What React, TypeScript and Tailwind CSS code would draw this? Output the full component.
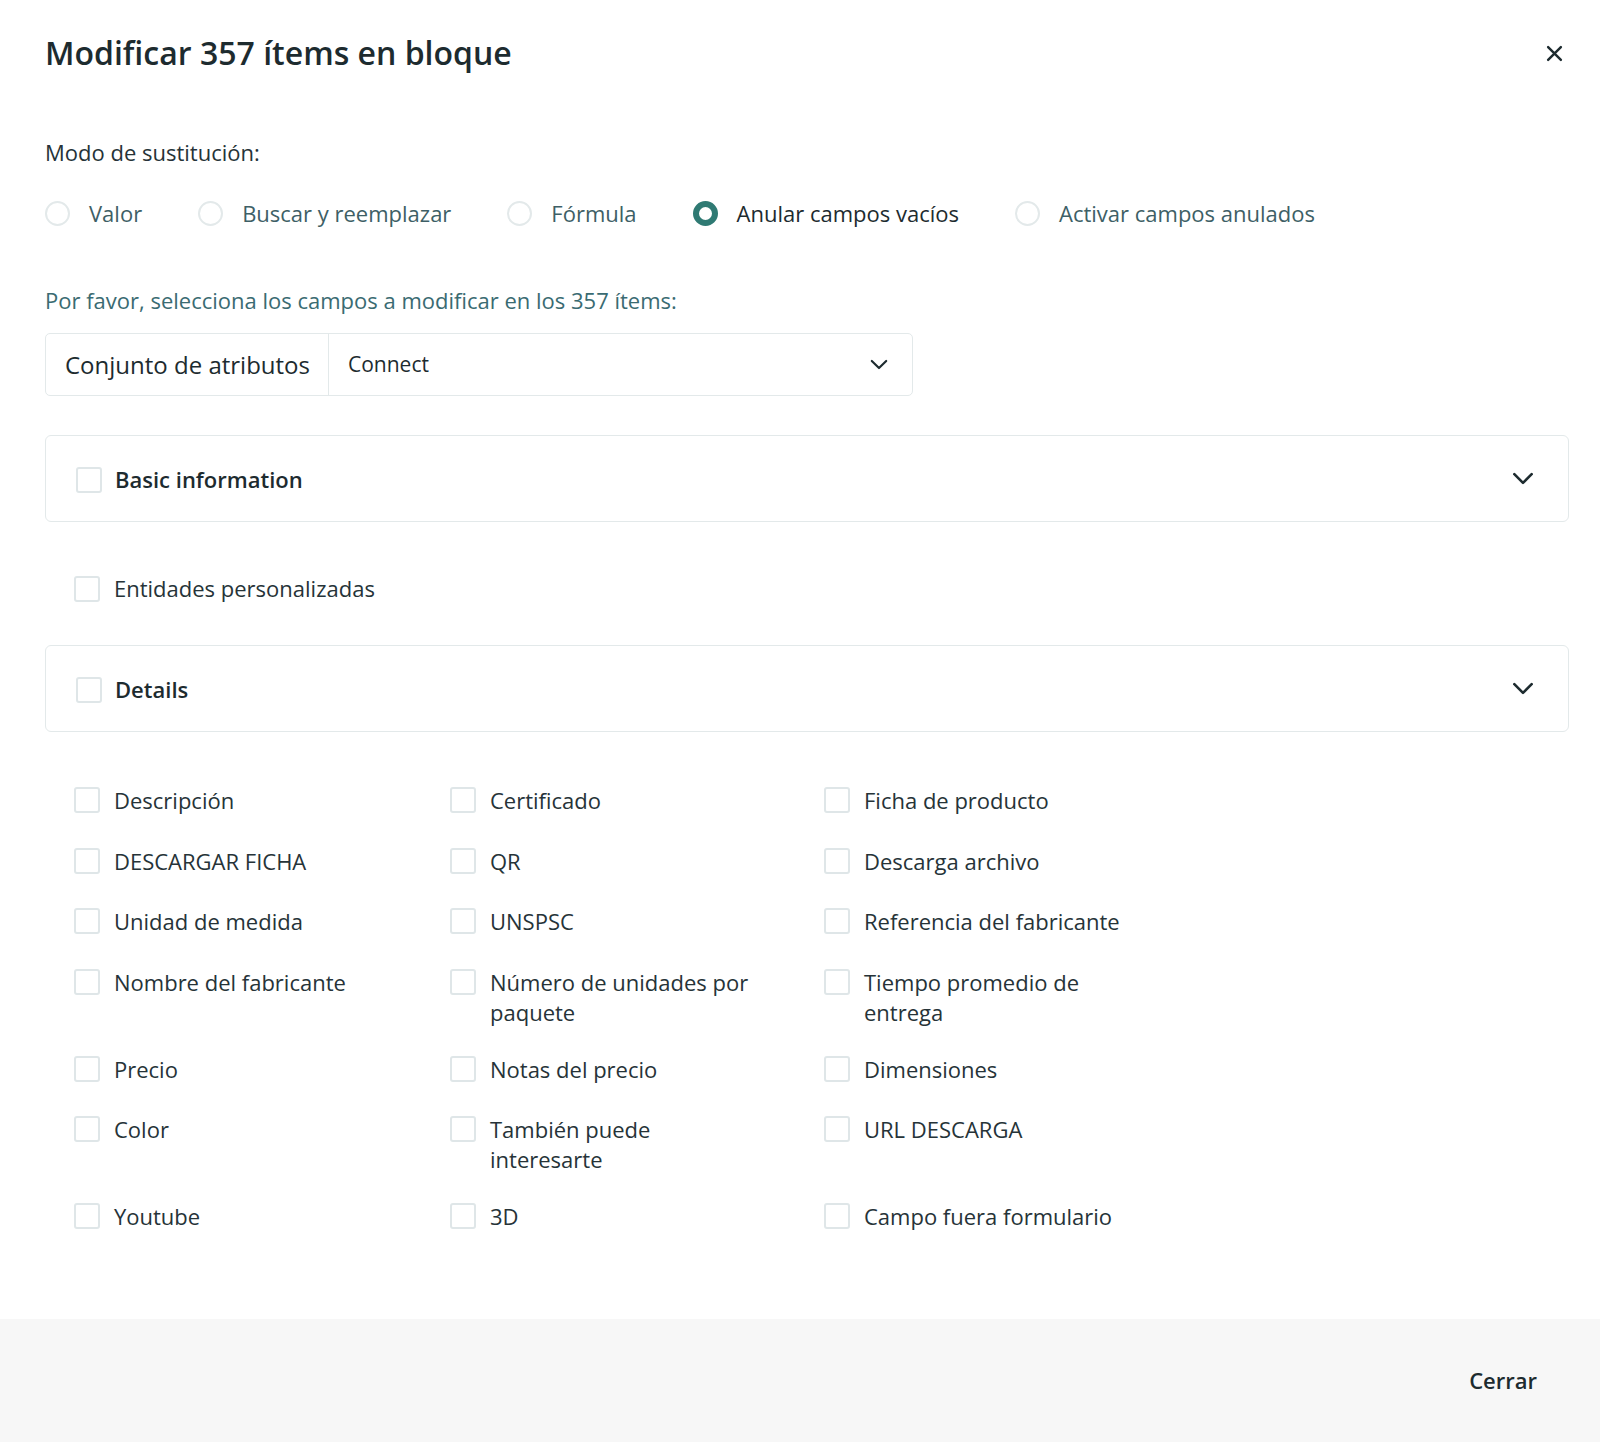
import React from "react";

const font = { fontFamily: '"Open Sans", "Noto Sans", sans-serif' };

function Checkbox() {
  return <span className="mt-[2px] h-[26px] w-[26px] shrink-0 rounded-[3px] border-2 border-[#dfe6e8] bg-white" />;
}

function Radio({ checked }: { checked?: boolean }) {
  return checked ? (
    <span className="h-[25px] w-[25px] shrink-0 rounded-full border-[6px] border-[#2f7a73] bg-white" />
  ) : (
    <span className="h-[25px] w-[25px] shrink-0 rounded-full border-2 border-[#e3e9ea] bg-white" />
  );
}

function Chevron({ className = "" }: { className?: string }) {
  return (
    <svg viewBox="0 0 20 12" className={className} fill="none" stroke="#1d2b2f" strokeWidth="2.4" strokeLinecap="round" strokeLinejoin="round">
      <path d="M2 2l8 8 8-8" />
    </svg>
  );
}

const modes = [
  { label: "Valor" },
  { label: "Buscar y reemplazar" },
  { label: "Fórmula" },
  { label: "Anular campos vacíos", checked: true },
  { label: "Activar campos anulados" },
];

const fields = [
  "Descripción",
  "Certificado",
  "Ficha de producto",
  "DESCARGAR FICHA",
  "QR",
  "Descarga archivo",
  "Unidad de medida",
  "UNSPSC",
  "Referencia del fabricante",
  "Nombre del fabricante",
  "Número de unidades por paquete",
  "Tiempo promedio de entrega",
  "Precio",
  "Notas del precio",
  "Dimensiones",
  "Color",
  "También puede interesarte",
  "URL DESCARGA",
  "Youtube",
  "3D",
  "Campo fuera formulario",
];

function Section({ title }: { title: string }) {
  return (
    <div className="flex h-[87px] items-center rounded-[6px] border border-[#e3e9ea] pl-[30px] pr-[34px]">
      <span className="flex items-center gap-[13px]">
        <Checkbox />
        <span className="text-[22px] font-semibold leading-[28px] text-[#1d2b2f]">{title}</span>
      </span>
      <Chevron className="ml-auto h-[13px] w-[22px]" />
    </div>
  );
}

export default function App() {
  return (
    <div style={font} className="flex h-[1442px] w-full flex-col bg-white text-[#263338]">
      <div className="flex h-[106px] shrink-0 items-center pl-[45px] pr-[37px]">
        <h1 className="text-[32px] font-semibold leading-[40px] text-[#1d2b2f]">Modificar 357 ítems en bloque</h1>
        <svg viewBox="0 0 16 16" className="ml-auto h-[17px] w-[17px]" fill="none" stroke="#1d2b2f" strokeWidth="2.3" strokeLinecap="round">
          <path d="M2 2l12 12M14 2L2 14" />
        </svg>
      </div>

      <div className="flex flex-1 flex-col pl-[45px] pr-[31px]">
        <div className="mt-[32px] text-[22px] leading-[28px] text-[#263338]">Modo de sustitución:</div>
        <div className="mt-[32px] flex h-[30px] items-center">
          {modes.map((m) => (
            <div key={m.label} className="mr-[56px] flex items-center gap-[19px]">
              <Radio checked={m.checked} />
              <span className={"text-[22px] leading-[28px] " + (m.checked ? "text-[#1d2b2f]" : "text-[#3e5f66]")}>{m.label}</span>
            </div>
          ))}
        </div>

        <div className="mt-[58px] text-[22px] leading-[28px] text-[#3a6b72]">Por favor, selecciona los campos a modificar en los 357 ítems:</div>

        <div className="mt-[19px] flex h-[63px] w-[868px] rounded-[5px] border border-[#e3e9ea]">
          <div className="flex items-center border-r border-[#e3e9ea] pl-[19px] pr-[18px] text-[24px] text-[#1d2b2f]">Conjunto de atributos</div>
          <div className="flex flex-1 items-center pl-[19px] pr-[24px]">
            <span className="text-[21px] text-[#1d2b2f]">Connect</span>
            <Chevron className="ml-auto h-[11px] w-[18px]" />
          </div>
        </div>

        <div className="mt-[39px]">
          <Section title="Basic information" />
        </div>

        <div className="ml-[29px] mt-[52px] flex items-start gap-[14px]">
          <Checkbox />
          <span className="text-[22px] leading-[29px]">Entidades personalizadas</span>
        </div>

        <div className="mt-[42px]">
          <Section title="Details" />
        </div>

        <div className="ml-[29px] mt-[53px] grid grid-cols-[376px_374px_375px] gap-y-[27px]">
          {fields.map((f) => (
            <div key={f} className="flex min-h-[33.5px] items-start gap-[14px]">
              <Checkbox />
              <span className="max-w-[268px] text-[22px] leading-[30px]">{f}</span>
            </div>
          ))}
        </div>
      </div>

      <div className="flex h-[123px] shrink-0 items-center justify-end bg-[#f7f7f7] pr-[63px]">
        <span className="text-[22px] font-semibold text-[#1d2b2f]">Cerrar</span>
      </div>
    </div>
  );
}
